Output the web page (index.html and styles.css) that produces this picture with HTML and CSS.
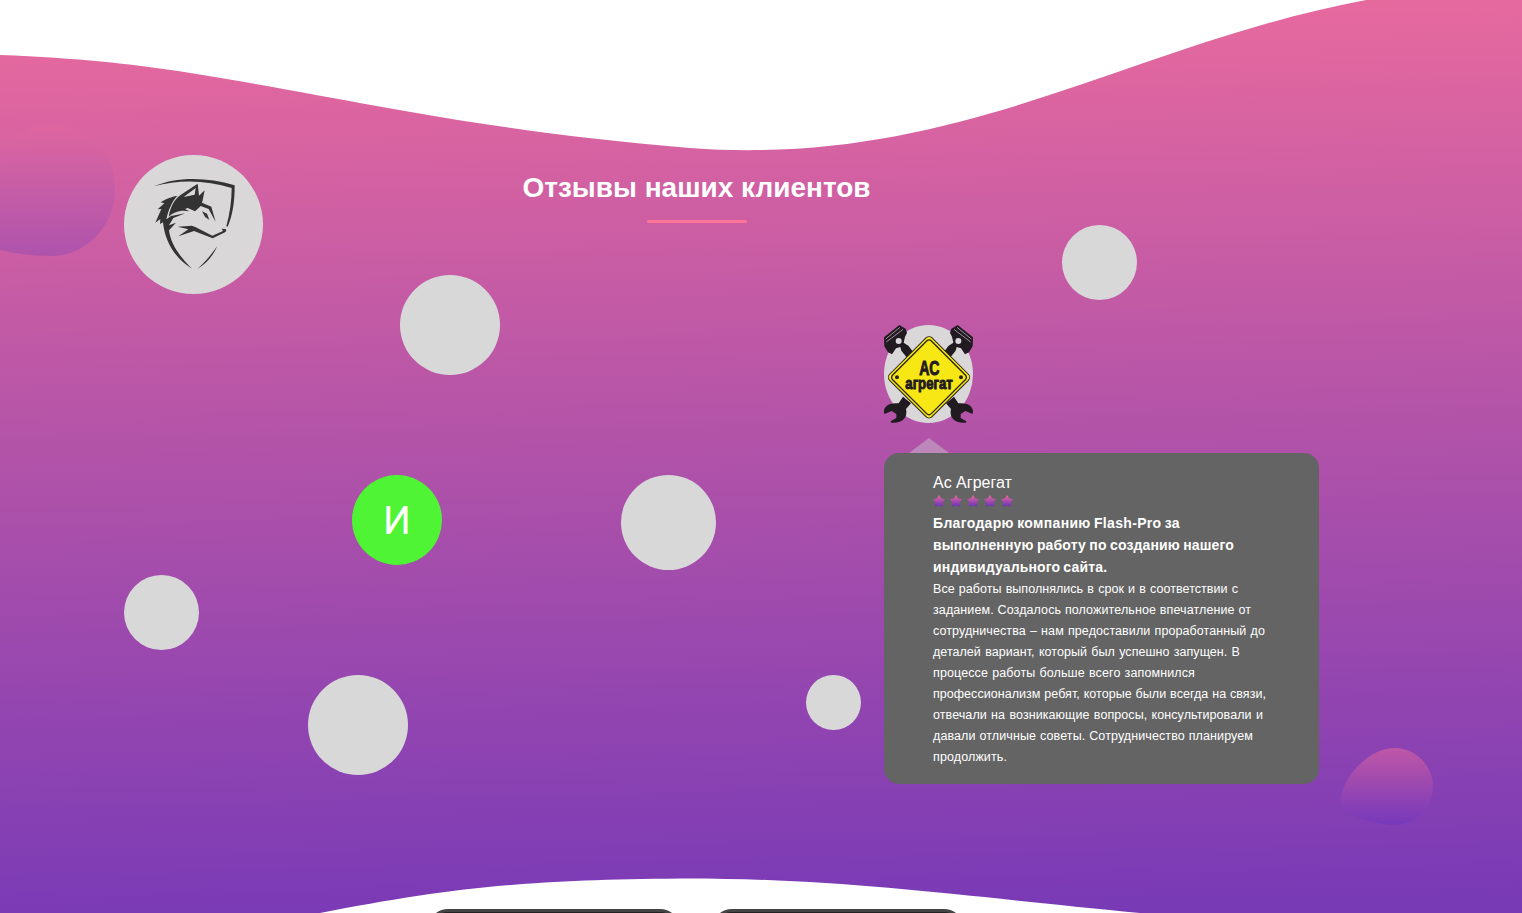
FILE: index.html
```html
<!DOCTYPE html>
<html lang="ru">
<head>
<meta charset="utf-8">
<title>Отзывы наших клиентов</title>
<link rel="stylesheet" href="styles.css">
</head>
<body>
<section class="reviews">
  <svg class="backdrop" viewBox="0 0 1522 913" aria-hidden="true">
    <defs>
      <linearGradient id="bg" gradientUnits="userSpaceOnUse" x1="745" y1="0" x2="765" y2="913"><stop offset="0" stop-color="#e86a9e"/><stop offset=".5" stop-color="#b052a9"/><stop offset="1" stop-color="#793ab6"/></linearGradient>
      <linearGradient id="blob" x1="0" y1="0" x2="0" y2="1"><stop offset="0" stop-color="#e9699d"/><stop offset="1" stop-color="#6c34c0"/></linearGradient>
      <linearGradient id="blob-left" x1="0" y1="0" x2="0" y2="1"><stop offset="0" stop-color="#e2689f"/><stop offset="1" stop-color="#8f48b5"/></linearGradient>
    </defs>
    <path fill="url(#bg)" d="M0 55C80 58 130 64 178 71C350 98 470 130 690 148C960 168 1130 44 1366 0H1522V913H1140C960 896 840 878 680 878.500C510 880 440 890 320 913H0Z"/>
    <path fill="url(#blob-left)" opacity=".48" d="M-16 170C2 140 25 125 52 125C90 125 115 154 115 190C115 226 86 256 51 256C31 256 14 253 0 250L-16 245Z"/>
    <path fill="url(#blob)" opacity=".55" d="M1341 800C1341 780 1367 748 1395 748C1416 748 1433 766 1433 787C1433 808 1416 825 1393 825C1370 823 1341 816 1341 800Z"/>
  </svg>

  <header class="heading">
    <h2>Отзывы наших клиентов</h2>
    <span class="rule"></span>
  </header>

  <div class="people">
    <span class="dot d1"></span><span class="dot d2"></span><span class="dot d3"></span>
    <span class="dot d4"></span><span class="dot d5"></span><span class="dot d6"></span>
    <span class="dot letter">И</span>
    <svg class="wolf" viewBox="0 0 450 450">
      <circle cx="220.500" cy="223.500" r="208.500" fill="#d9d7d8"/>
      <g fill="#333">
        <path d="M101 109C170 80 258 80 344 106C344 152 339 194 323 230L319 229C330 190 335 150 335 114C262 91 180 87 101 109Z"/>
        <path fill-rule="evenodd" d="M146 200C152 165 168 143 185 133L233 101L237 137L254 121L248 151L246 158L274 170L287 216L266 177L242 168L236 174L225 184L203 174L195 177L208 184C180 178 161 187 146 200ZM191 141L224 134L227 114Z"/>
        <path d="M172 137C150 141 136 148 122 157L133 160L113 178L124 177L106 218L121 207L120 222L129 217C135 278 167 326 216 356C177 317 153 284 147 241L168 218L147 226L160 204L196 190L153 198L139 208C145 180 156 154 172 137Z"/>
        <path d="M246 184L261 191L268 209L256 202Z"/>
        <path d="M173 230L215 227L226 231L277 257L309 243L305 236L317 237L319 243L315 247L278 265L222 243L175 259L205 238Z"/>
        <path d="M292 288C279 318 260 340 232 357C258 333 276 311 292 288Z"/>
      </g>
    </svg>
    <svg class="agregat" viewBox="0 0 360 450">
      <defs>
        <g id="tool">
          <path fill="#211a20" d="M42 67L88 30L107 41L111 54L105 65L101 83L116 93L136 120L116 134L94 107L91 96L78 100L66 118L54 112L43 94Z"/>
          <path d="M47 72L90 37M49 81L99 43" fill="none" stroke="#b5a5b2" stroke-width="2.500"/>
          <circle cx="86" cy="78" r="9" fill="#d9d7d8"/>
          <path fill="#211a20" d="M99 245L123 265L108 282C114 307 98 326 63 323L62 319L79 309V297L65 288L43 297C38 278 51 263 86 265Z"/>
        </g>
      </defs>
      <ellipse cx="175.500" cy="177" rx="133.500" ry="147" fill="#d9d7d8"/>
      <use href="#tool"/><use href="#tool" transform="translate(351 0) scale(-1 1)"/>
      <rect x="87" y="97" width="180" height="180" rx="13" fill="#f7e715" stroke="#29231a" stroke-width="3" transform="rotate(45 177 187)"/>
      <rect x="95" y="105" width="164" height="164" rx="10" fill="none" stroke="#29231a" stroke-width="4" transform="rotate(45 177 187)"/>
      <circle cx="81" cy="187" r="6" fill="#29231a"/><circle cx="273" cy="187" r="6" fill="#29231a"/>
      <text class="logo-text"><tspan x="148" y="180" font-size="63" textLength="60" lengthAdjust="spacingAndGlyphs">АС</tspan><tspan x="106" y="221" font-size="49" textLength="142" lengthAdjust="spacingAndGlyphs">агрегат</tspan></text>
    </svg>
    <span class="pointer"></span>
    <article class="review">
      <h3>Ас Агрегат</h3>
      <svg class="stars" viewBox="0 0 80 12">
        <defs><linearGradient id="s" x1="0" y1="0" x2="0" y2="1"><stop stop-color="#e9699d"/><stop offset="1" stop-color="#6c31bd"/></linearGradient>
        <path id="star" fill="url(#s)" stroke="url(#s)" stroke-width=".8" stroke-linejoin="round" d="M6 .6L7.900 3.700L11.500 4.500L9.400 7.300L9.700 11.200L6 10L2.300 11.200L2.600 7.300L.5 4.500L4.100 3.700Z"/></defs>
        <use href="#star"/><use href="#star" x="17"/><use href="#star" x="34"/><use href="#star" x="51"/><use href="#star" x="68"/>
      </svg>
      <p class="lead"><span class="w247">Благодарю компанию Flash-Pro за</span><span class="w301">выполненную работу по созданию нашего</span><span class="w174">индивидуального сайта.</span></p>
      <p class="body"><span class="w305">Все работы выполнялись в срок и в соответствии с</span><span class="w318">заданием. Создалось положительное впечатление от</span><span class="w332">сотрудничества – нам предоставили проработанный до</span><span class="w307">деталей вариант, который был успешно запущен. В</span><span class="w262">процессе работы больше всего запомнился</span><span class="w333">профессионализм ребят, которые были всегда на связи,</span><span class="w330">отвечали на возникающие вопросы, консультировали и</span><span class="w320">давали отличные советы. Сотрудничество планируем</span><span class="w74">продолжить.</span></p>
    </article>
  </div>
  <div class="next-cards"><span></span><span></span></div>
</section>
</body>
</html>
```
FILE: styles.css
```css
* { box-sizing: border-box; }
body { margin: 0; background: #fff; font-family: "Liberation Sans", Arial, sans-serif; color: #fff; overflow: hidden; }
.reviews { position: relative; height: 913px; overflow: hidden; }
.backdrop { position: absolute; inset: 0; width: 1522px; height: 913px; }
.heading { position: relative; width: 1393px; padding-top: 170px; display: flex; flex-direction: column; align-items: center; }
h2 { margin: 0; font-size: 28px; line-height: 35px; font-weight: 700; white-space: nowrap; }
.rule { width: 100px; height: 3px; margin-top: 15px; border-radius: 2px; background: #ff7595; }
.people { position: absolute; inset: 0; }
.dot { position: absolute; border-radius: 50%; background: #d8d8d8; }
.d1 { left: 400px; top: 275px; width: 100px; height: 100px; }
.d2 { left: 1062px; top: 225px; width: 75px; height: 75px; }
.d3 { left: 621px; top: 475px; width: 95px; height: 95px; }
.d4 { left: 124px; top: 575px; width: 75px; height: 75px; }
.d5 { left: 308px; top: 675px; width: 100px; height: 100px; }
.d6 { left: 806px; top: 675px; width: 55px; height: 55px; }
.letter { left: 352px; top: 475px; width: 90px; height: 90px; background: #4ff534; font: 39px/92px Roboto, sans-serif; text-align: center; }
.wolf { position: absolute; left: 120px; top: 150px; width: 150px; height: 150px; }
.agregat { position: absolute; left: 870px; top: 315px; width: 120px; height: 150px; }
.logo-text { font-family: "Liberation Sans", sans-serif; font-weight: 700; fill: #211a20; stroke: #211a20; stroke-width: 3; }
.pointer { position: absolute; left: 909px; top: 438px; border: 20px solid transparent; border-top: 0; border-bottom: 15px solid rgba(195,165,195,.65); }
.review { position: absolute; left: 884px; top: 453px; width: 435px; height: 331px; padding: 20px 48px 0 49px; border-radius: 15px; background: #646464; }
h3 { margin: 0; font-size: 16px; font-weight: 400; line-height: 20px; }
.stars { display: block; width: 80px; height: 12px; margin: 2px 0 5px; }
p { margin: 0; }
p span { display: block; white-space: nowrap; text-align: justify; text-align-last: justify; }
.lead { font-size: 14px; font-weight: 700; line-height: 22px; letter-spacing: .14px; word-spacing: -1px; }
.body { padding-top: 1px; font-size: 12.5px; line-height: 21px; letter-spacing: .04px; word-spacing: -1px; }
.w247 { width: 247px; letter-spacing: .33px; } .w301 { width: 301px; } .w174 { width: 174px; letter-spacing: .16px; }
.w305 { width: 305px; } .w318 { width: 318px; letter-spacing: .1px; } .w332 { width: 332px; letter-spacing: .09px; }
.w307 { width: 307px; } .w262 { width: 262px; letter-spacing: .12px; } .w333 { width: 333px; }
.w330 { width: 330px; letter-spacing: .08px; } .w320 { width: 320px; letter-spacing: .1px; } .w74 { width: 74px; letter-spacing: .12px; }
.next-cards { position: absolute; left: 428px; top: 909px; display: flex; gap: 32px; }
.next-cards span { width: 252px; height: 60px; border: 3px solid #444; border-radius: 20px; background: #222; }
```
